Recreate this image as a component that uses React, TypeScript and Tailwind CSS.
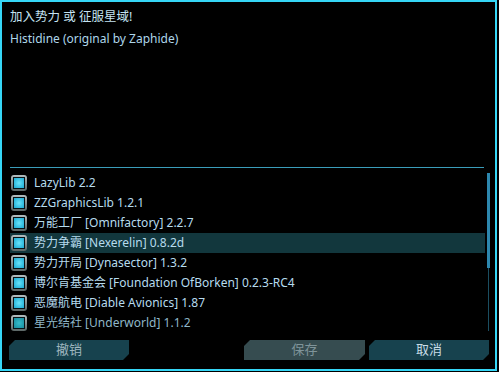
import React from 'react'

interface ModRow {
  name: string
  selected?: boolean
  dim?: boolean
}

const mods: ModRow[] = [
  { name: 'LazyLib 2.2' },
  { name: 'ZZGraphicsLib 1.2.1' },
  { name: '万能工厂 [Omnifactory] 2.2.7' },
  { name: '势力争霸 [Nexerelin] 0.8.2d', selected: true },
  { name: '势力开局 [Dynasector] 1.3.2' },
  { name: '博尔肯基金会 [Foundation OfBorken] 0.2.3-RC4' },
  { name: '恶魔航电 [Diable Avionics] 1.87' },
  { name: '星光结社 [Underworld] 1.1.2', dim: true },
]

const font = {
  fontFamily: '"Noto Sans", "Noto Sans CJK SC", sans-serif',
}

const CheckBox = ({ dim }: { dim?: boolean }) => {
  return (
    <div className="w-[16px] h-[16px] rounded-[3px] bg-gradient-to-b from-[#b3bdbf] to-[#5b6665] p-[2px] shrink-0">
      <div className="w-full h-full bg-[#081418] p-[1px]">
        <div
          className={
            dim
              ? 'w-full h-full bg-[radial-gradient(circle,#35bccb_0%,#178b9d_100%)]'
              : 'w-full h-full bg-[radial-gradient(circle,#66e4fa_0%,#1ba9d2_100%)]'
          }
        />
      </div>
    </div>
  )
}

const Row = ({ row }: { row: ModRow }) => {
  return (
    <div
      className={
        'h-[20px] flex items-center gap-[7px] pl-[1px] ' +
        (row.selected ? 'bg-[#12373d]' : '')
      }
    >
      <CheckBox dim={row.dim} />
      <span
        className={
          'text-[12px] leading-[20px] whitespace-nowrap ' +
          (row.dim ? 'text-[#8fb7c8]' : 'text-[#b6dbee]')
        }
      >
        {row.name}
      </span>
    </div>
  )
}

const chamfer =
  '[clip-path:polygon(6px_0,100%_0,100%_calc(100%-6px),calc(100%-6px)_100%,0_100%,0_6px)]'

export default function App() {
  return (
    <div className="w-[499px] h-[372px] bg-black" style={font}>
      <div className="w-[497px] h-[371px] border-2 border-[#36d6f6] bg-black flex flex-col">
        <div className="h-[165px] pl-[8px] pt-[5px] flex flex-col gap-[2px]">
          <div className="text-[12.5px] leading-[20px] text-[#c4e3f2]">
            加入势力 或 征服星域!
          </div>
          <div className="text-[12px] leading-[20px] text-[#aed6ea]">
            Histidine (original by Zaphide)
          </div>
        </div>
        <div className="ml-[8px] w-[474px] h-[1px] bg-[#3a9dba]" />
        <div className="flex mt-[5px] pl-[8px]">
          <div className="w-[475px] flex flex-col">
            {mods.map((m) => (
              <Row key={m.name} row={m} />
            ))}
          </div>
          <div className="w-[4px] h-[158px] ml-[1px] flex flex-col items-center">
            <div className="w-[3px] h-[95px] bg-[#2d87ae]" />
            <div className="w-[1px] flex-1 bg-[#1b4e60]" />
          </div>
        </div>
        <div className="flex mt-[7px] pl-[7px] pr-[6px] justify-between">
          <button
            className={
              'w-[120px] h-[20px] bg-[#17424e] text-[13px] text-[#9fb6bf] ' +
              chamfer
            }
          >
            撤销
          </button>
          <div className="flex gap-[4px]">
            <button
              className={
                'w-[121px] h-[20px] bg-[#364c50] text-[13px] text-[#7f949a] ' +
                chamfer
              }
            >
              保存
            </button>
            <button
              className={
                'w-[120px] h-[20px] bg-[#17424e] text-[13px] text-[#c8dde6] ' +
                chamfer
              }
            >
              取消
            </button>
          </div>
        </div>
      </div>
    </div>
  )
}
